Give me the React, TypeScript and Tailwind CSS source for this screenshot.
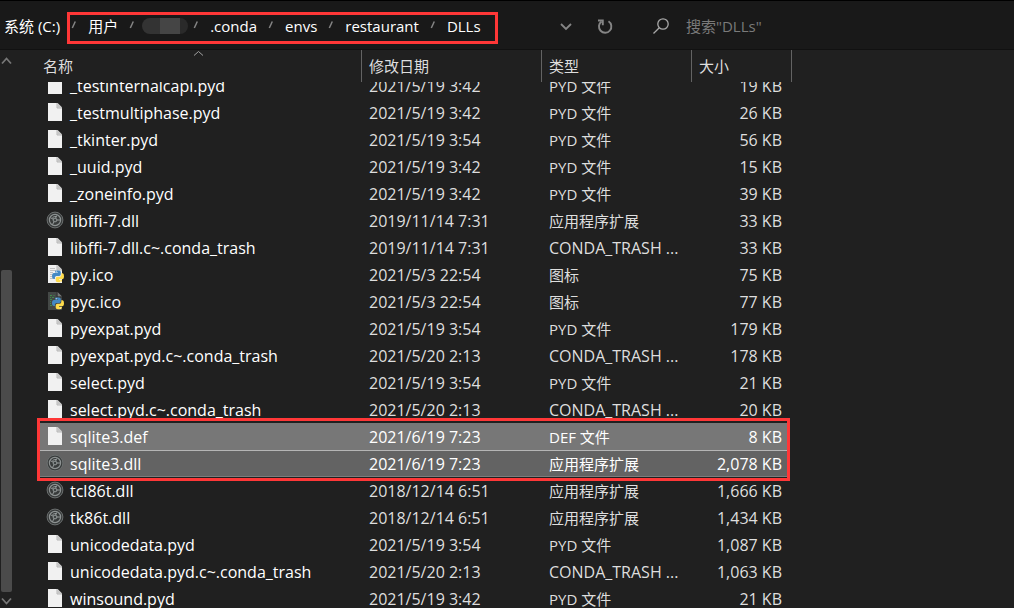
import { useLayoutEffect, useRef } from 'react';

type Kind = 'file' | 'dll' | 'py' | 'pyc';

interface Entry {
  name: string;
  kind: Kind;
  date: string;
  type: string;
  size: string;
  state?: 'selected' | 'focused';
}

const PYD = 'PYD 文件';
const EXT = '应用程序扩展';
const TRASH = 'CONDA_TRASH ...';

const entries: Entry[] = [
  { name: '_testinternalcapi.pyd', kind: 'file', date: '2021/5/19 3:42', type: PYD, size: '19 KB' },
  { name: '_testmultiphase.pyd', kind: 'file', date: '2021/5/19 3:42', type: PYD, size: '26 KB' },
  { name: '_tkinter.pyd', kind: 'file', date: '2021/5/19 3:54', type: PYD, size: '56 KB' },
  { name: '_uuid.pyd', kind: 'file', date: '2021/5/19 3:42', type: PYD, size: '15 KB' },
  { name: '_zoneinfo.pyd', kind: 'file', date: '2021/5/19 3:42', type: PYD, size: '39 KB' },
  { name: 'libffi-7.dll', kind: 'dll', date: '2019/11/14 7:31', type: EXT, size: '33 KB' },
  { name: 'libffi-7.dll.c~.conda_trash', kind: 'file', date: '2019/11/14 7:31', type: TRASH, size: '33 KB' },
  { name: 'py.ico', kind: 'py', date: '2021/5/3 22:54', type: '图标', size: '75 KB' },
  { name: 'pyc.ico', kind: 'pyc', date: '2021/5/3 22:54', type: '图标', size: '77 KB' },
  { name: 'pyexpat.pyd', kind: 'file', date: '2021/5/19 3:54', type: PYD, size: '179 KB' },
  { name: 'pyexpat.pyd.c~.conda_trash', kind: 'file', date: '2021/5/20 2:13', type: TRASH, size: '178 KB' },
  { name: 'select.pyd', kind: 'file', date: '2021/5/19 3:54', type: PYD, size: '21 KB' },
  { name: 'select.pyd.c~.conda_trash', kind: 'file', date: '2021/5/20 2:13', type: TRASH, size: '20 KB' },
  { name: 'sqlite3.def', kind: 'file', date: '2021/6/19 7:23', type: 'DEF 文件', size: '8 KB', state: 'selected' },
  { name: 'sqlite3.dll', kind: 'dll', date: '2021/6/19 7:23', type: EXT, size: '2,078 KB', state: 'focused' },
  { name: 'tcl86t.dll', kind: 'dll', date: '2018/12/14 6:51', type: EXT, size: '1,666 KB' },
  { name: 'tk86t.dll', kind: 'dll', date: '2018/12/14 6:51', type: EXT, size: '1,434 KB' },
  { name: 'unicodedata.pyd', kind: 'file', date: '2021/5/19 3:54', type: PYD, size: '1,087 KB' },
  { name: 'unicodedata.pyd.c~.conda_trash', kind: 'file', date: '2021/5/20 2:13', type: TRASH, size: '1,063 KB' },
  { name: 'winsound.pyd', kind: 'file', date: '2021/5/19 3:42', type: PYD, size: '21 KB' },
];

function PythonMark() {
  return (
    <g transform="translate(1 -.5)">
      <path d="M9.5 6h2.6q1.7 0 1.7 1.7v2.1q0 1.6-1.6 1.6H9.6q-1.700 0-1.700 1.700v1.300H7q-2 0-2-3t2-3h4V8H8V7.400Q8 6 9.500 6z" fill="#4489c4" />
      <path d="M14.300 8.800h1.300q1.400 0 1.400 3t-1.800 3H12v.6h3V16q0 1.800-1.800 1.800h-2.400Q8.700 17.800 8.700 16v-2q0-1.700 1.800-1.700h2.200q1.600 0 1.600-1.700z" fill="#ffdc4c" />
      <circle cx="9.300" cy="7.300" r=".5" fill="#fff" />
      <circle cx="13.600" cy="16.500" r=".5" fill="#fff" />
    </g>
  );
}

function FileIcon({ kind }: { kind: Kind }) {
  if (kind === 'dll') {
    return (
      <svg viewBox="0 0 18 18" className="mb-px size-[18px] shrink-0" aria-hidden="true">
        <circle cx="9" cy="9" r="7.900" fill="#383b3b" stroke="#6c7070" strokeWidth="1" />
        <circle cx="9" cy="9" r="5.600" fill="none" stroke="#8d9292" strokeWidth="1.200" />
        <path d="M4.500 6.800L9 9l-2.500 4.500M9 9h5M9 9l1.600-4.500M6.500 6.500q2-1.500 4-1" fill="none" stroke="#959a9a" strokeWidth="1" />
        <circle cx="9" cy="9" r="1.900" fill="#3f4444" stroke="#9ba0a0" strokeWidth=".9" />
      </svg>
    );
  }
  const dark = kind === 'pyc';
  return (
    <svg viewBox="0 0 18 18" className="mb-px size-[18px] shrink-0" aria-hidden="true">
      <path d="M2 0h9.500L16 4.500V18H2z" fill={dark ? '#444846' : '#f1f1f1'} />
      <path d="M11.500 0v4.500H16z" fill={dark ? '#777' : '#c6c6c6'} />
      <path d="M11 0v5h5" fill="none" stroke={dark ? '#2b2b2b' : '#a9a9a9'} strokeWidth=".8" />
      {kind === 'py' && <path d="M4 3.500h5M4 5.500h6M4 7.500h3M4 9.500h2M4 11.500h2M4 13.500h3" stroke="#b5b5b5" strokeWidth=".8" />}
      {dark && <path d="M4 3.500h2M7.500 3.500h1M4 5.500h1M6 5.500h2M4 7.500h2M4 9.500h1M4 11.500h1M4 13.500h2" stroke="#3f8a4a" strokeWidth="1" />}
      {(kind === 'py' || dark) && <PythonMark />}
    </svg>
  );
}

function Separator() {
  return (
    <svg viewBox="0 0 28 16" className="h-4 w-7 shrink-0" aria-hidden="true">
      <path d="M12.300 10l3-6.500" stroke="#858585" strokeWidth="1.500" fill="none" />
    </svg>
  );
}

function Crumb({ label }: { label: string }) {
  return (
    <a href="#" className="whitespace-nowrap text-white">
      {label}
    </a>
  );
}

function AddressBar() {
  return (
    <header className="flex h-[50px] shrink-0 items-center border-t border-b border-t-black border-b-[#111111] bg-[#191919] pt-0.5 pl-1">
      <nav aria-label="路径" className="relative flex w-[544px] shrink-0 items-center">
        <Crumb label="系统 (C:)" />
        <Separator />
        <Crumb label="用户" />
        <Separator />
        <span className="-mr-1.5 -ml-1 flex h-4 w-[46px] shrink-0 overflow-hidden rounded-full">
          <span className="w-[18px] bg-[#333333]" />
          <span className="w-5 bg-[#454545]" />
          <span className="w-2 bg-[#2a2a2a]" />
        </span>
        <Separator />
        <Crumb label=".conda" />
        <Separator />
        <Crumb label="envs" />
        <Separator />
        <Crumb label="restaurant" />
        <Separator />
        <Crumb label="DLLs" />
        <span className="pointer-events-none absolute -top-[3px] -bottom-[7px] left-[63px] w-[431px] border-3 border-[#ff3737]" />
      </nav>
      <button aria-label="以前的位置" className="flex size-9 shrink-0 items-center justify-center">
        <svg viewBox="0 0 16 16" className="size-4" aria-hidden="true">
          <path d="M3 6l5 5 5-5" fill="none" stroke="#858585" strokeWidth="1.800" />
        </svg>
      </button>
      <button aria-label="刷新" className="ml-[3px] flex size-9 shrink-0 items-center justify-center">
        <svg viewBox="0 0 18 18" className="size-[18px]" aria-hidden="true">
          <path d="M12.500 4.300A6.200 6.200 0 1 1 5.500 4.500" fill="none" stroke="#858585" strokeWidth="1.900" />
          <path d="M2 3.500h4.800v4.800" fill="none" stroke="#858585" strokeWidth="1.900" />
        </svg>
      </button>
      <label className="ml-[29px] flex min-w-0 grow items-center gap-4">
        <svg viewBox="0 0 18 18" className="size-[18px] shrink-0" aria-hidden="true">
          <circle cx="11" cy="7" r="5.200" fill="none" stroke="#a8a8a8" strokeWidth="1.300" />
          <path d="M7.300 10.700L1.500 16.500" stroke="#a8a8a8" strokeWidth="1.300" />
        </svg>
        <input
          type="text"
          aria-label="搜索"
          placeholder='搜索"DLLs"'
          className="min-w-0 grow bg-transparent outline-none placeholder:text-[#7a7a7a]"
        />
      </label>
    </header>
  );
}

function TreeScrollbar() {
  return (
    <div className="flex w-3 shrink-0 flex-col items-center pt-1.5 pb-0.5">
      <svg viewBox="0 0 12 10" className="h-2.5 w-3 shrink-0" aria-hidden="true">
        <path d="M2 7.500l4.500-5 4.500 5" fill="none" stroke="#777" strokeWidth="1.800" />
      </svg>
      <div className="grow-204 basis-0" />
      <div className="ml-px w-[11px] grow-322 basis-0 rounded-xs bg-[#4b4b4b]" />
      <svg viewBox="0 0 12 10" className="mt-1 h-2.5 w-3 shrink-0" aria-hidden="true">
        <path d="M2 2.500l4.500 5 4.500-5" fill="none" stroke="#777" strokeWidth="1.800" />
      </svg>
    </div>
  );
}

const rowLook = {
  selected: 'bg-[#777777] text-white',
  focused: 'border-t border-b border-t-[#b5b5b5] border-b-[#7c7c7c] bg-[#636363] text-white',
  plain: 'text-[#dedede]',
};

function Row({ entry }: { entry: Entry }) {
  const look = rowLook[entry.state ?? 'plain'];
  return (
    <tr aria-selected={entry.state !== undefined}>
      <td className="p-0">
        <div className={`flex h-[27px] items-center gap-1.5 pl-1.5 ${look}`}>
          <FileIcon kind={entry.kind} />
          <span className="text-[16px] leading-[22px] text-white">{entry.name}</span>
        </div>
      </td>
      <td className="p-0">
        <div className={`flex h-[27px] items-center pl-[7px] text-[16px] leading-[22px] ${look}`}>{entry.date}</div>
      </td>
      <td className="p-0">
        <div className={`flex h-[27px] items-center pl-[7px] ${entry.type === TRASH ? 'text-[16px] leading-[22px]' : ''} ${look}`}>{entry.type}</div>
      </td>
      <td className="p-0">
        <div className={`mr-[5px] flex h-[27px] items-center justify-end pr-[5px] text-[16px] leading-[22px] ${look}`}>{entry.size}</div>
      </td>
    </tr>
  );
}

function FileTable() {
  const pane = useRef<HTMLDivElement>(null);
  useLayoutEffect(() => {
    if (pane.current) pane.current.scrollTop = 10;
  }, []);
  const head = 'relative h-8 border-r border-[#636363] bg-[#202020] p-0 pl-[7px] text-left font-normal text-[#dedede]';
  return (
    <main ref={pane} className="min-w-0 grow overflow-y-auto pl-7 [scrollbar-width:none]">
      <div className="relative w-[752px]">
        <table className="w-full table-fixed border-separate border-spacing-0">
          <colgroup>
            <col className="w-[322px]" />
            <col className="w-[180px]" />
            <col className="w-[150px]" />
            <col className="w-[100px]" />
          </colgroup>
          <thead className="sticky top-0 z-10">
            <tr>
              <th className="relative h-8 border-r border-[#636363] bg-[#202020] p-0 pl-[3px] text-left font-normal text-[#dedede]">
                名称
                <svg viewBox="0 0 12 6" className="absolute top-0 left-[152px] h-1.5 w-3" aria-hidden="true">
                  <path d="M2 5.500l4.500-4 4.500 4" fill="none" stroke="#a0a0a0" strokeWidth="1" />
                </svg>
              </th>
              <th className={head}>修改日期</th>
              <th className={head}>类型</th>
              <th className={head}>大小</th>
            </tr>
          </thead>
          <tbody className="whitespace-nowrap">
            {entries.map((entry) => (
              <Row key={entry.name} entry={entry} />
            ))}
          </tbody>
        </table>
        <span className="pointer-events-none absolute top-[378px] -left-[3px] h-[63px] w-[753px] border-3 border-[#ff3737]" />
      </div>
    </main>
  );
}

export default function App() {
  return (
    <div className="flex h-screen flex-col overflow-hidden bg-[#202020] font-['Open_Sans','Noto_Sans_CJK_SC',sans-serif] text-[15px] leading-[22px] text-white">
      <AddressBar />
      <div className="flex min-h-0 grow">
        <TreeScrollbar />
        <FileTable />
      </div>
    </div>
  );
}
